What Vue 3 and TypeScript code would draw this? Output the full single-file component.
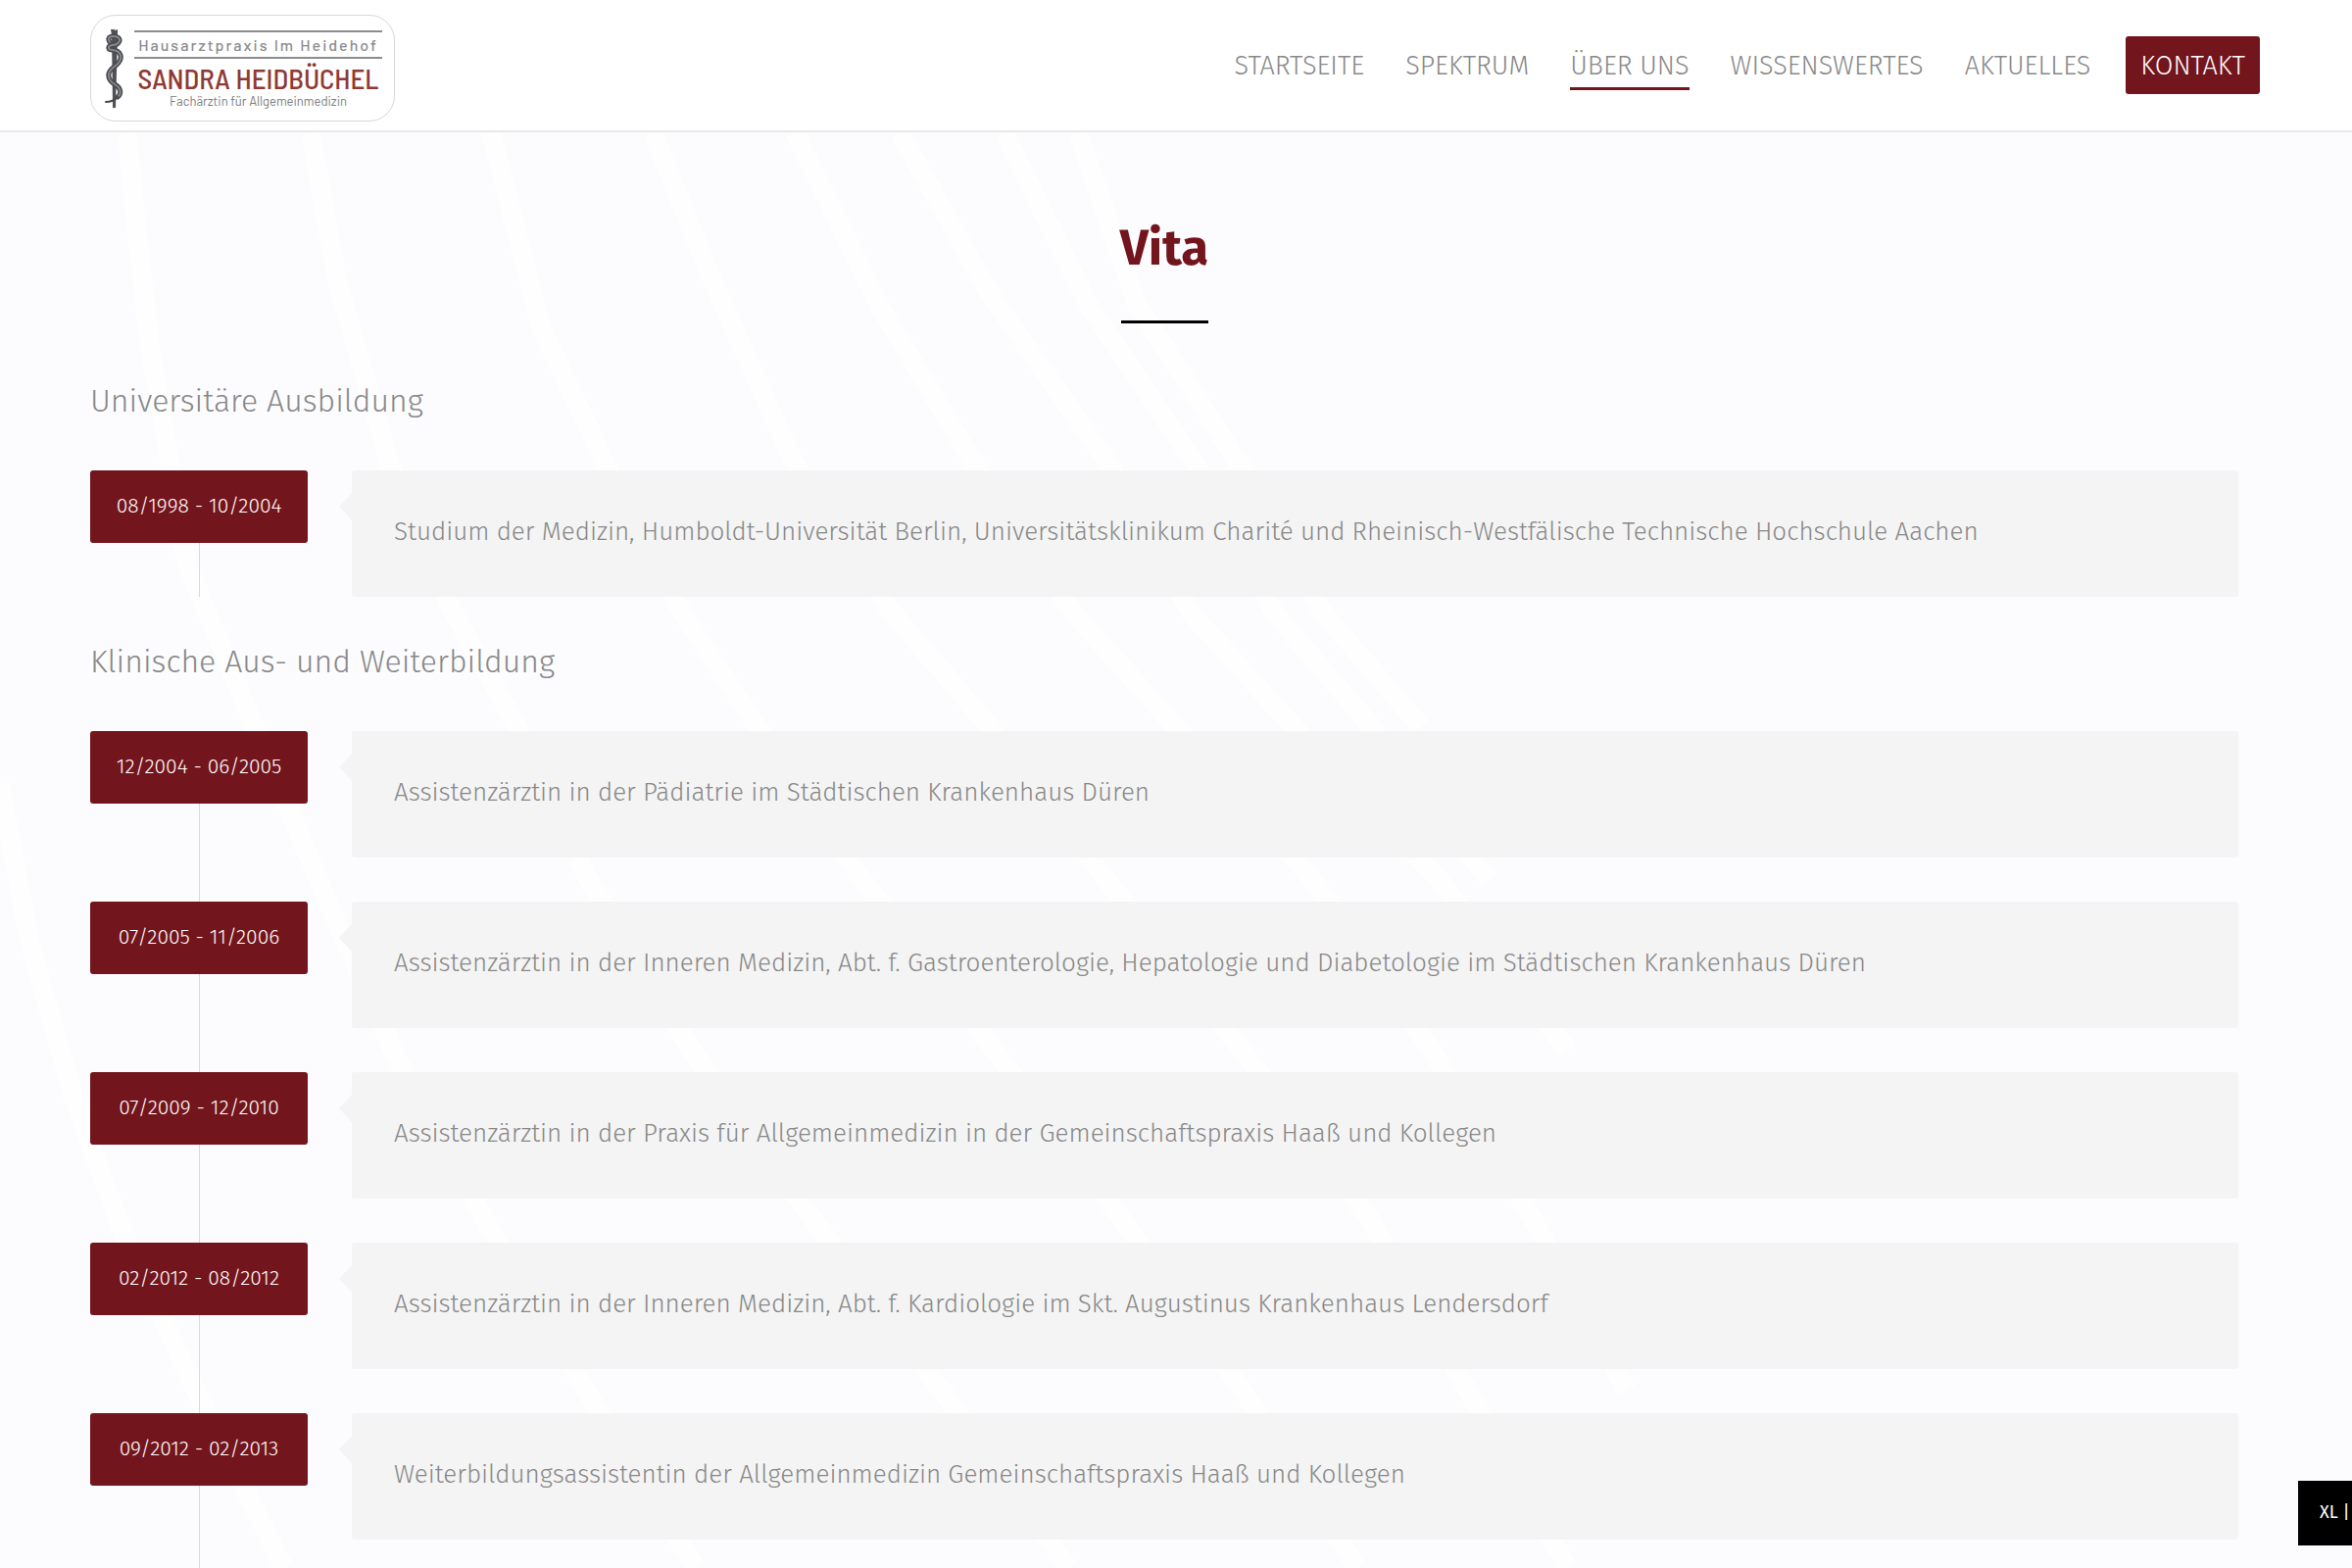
<script setup lang="ts">
interface NavItem {
  label: string
  href: string
  active?: boolean
}

interface Station {
  period: string
  text: string
}

interface Section {
  title: string
  ongoing?: boolean
  stations: Station[]
}

const nav: NavItem[] = [
  { label: 'STARTSEITE', href: '#startseite' },
  { label: 'SPEKTRUM', href: '#spektrum' },
  { label: 'ÜBER UNS', href: '#ueber-uns', active: true },
  { label: 'WISSENSWERTES', href: '#wissenswertes' },
  { label: 'AKTUELLES', href: '#aktuelles' },
]

const sections: Section[] = [
  {
    title: 'Universitäre Ausbildung',
    stations: [
      {
        period: '08/1998 - 10/2004',
        text: 'Studium der Medizin, Humboldt-Universität Berlin, Universitätsklinikum Charité und Rheinisch-Westfälische Technische Hochschule Aachen',
      },
    ],
  },
  {
    title: 'Klinische Aus- und Weiterbildung',
    ongoing: true,
    stations: [
      { period: '12/2004 - 06/2005', text: 'Assistenzärztin in der Pädiatrie im Städtischen Krankenhaus Düren' },
      { period: '07/2005 - 11/2006', text: 'Assistenzärztin in der Inneren Medizin, Abt. f. Gastroenterologie, Hepatologie und Diabetologie im Städtischen Krankenhaus Düren' },
      { period: '07/2009 - 12/2010', text: 'Assistenzärztin in der Praxis für Allgemeinmedizin in der Gemeinschaftspraxis Haaß und Kollegen' },
      { period: '02/2012 - 08/2012', text: 'Assistenzärztin in der Inneren Medizin, Abt. f. Kardiologie im Skt. Augustinus Krankenhaus Lendersdorf' },
      { period: '09/2012 - 02/2013', text: 'Weiterbildungsassistentin der Allgemeinmedizin Gemeinschaftspraxis Haaß und Kollegen' },
    ],
  },
]

// Soft light rays of the page backdrop
const rays: string[] = [
  '0,800 30,960 75,1120 130,1270 210,1440 290,1600',
  '130,135 140,240 153,353 191,576 260,742 325,898 401,1072 495,1246 598,1419 710,1600',
  '317,135 344,286 398,474 460,620 528,742 601,898 706,1072 831,1246 961,1419 1090,1600',
  '501,135 551,331 620,478 696,625 773,742 880,898 1015,1072 1146,1246 1268,1419 1385,1600',
  '666,135 727,286 811,474 910,625 1010,742 1129,898 1268,1072 1399,1246 1498,1419 1600,1600',
  '811,135 895,308 995,474 1095,625 1200,742 1340,898 1461,1072 1565,1246 1660,1419',
  '918,135 1010,300 1132,474 1215,625 1320,742 1469,898 1600,1072',
  '1025,135 1110,310 1220,474 1300,625 1400,742 1520,898',
  '1100,135 1160,310 1265,474 1350,625 1450,742',
]
</script>

<template>
  <div class="page">
    <svg class="backdrop" viewBox="0 0 2400 1600" preserveAspectRatio="none" aria-hidden="true">
      <polyline v-for="ray in rays" :key="ray" :points="ray" />
    </svg>

    <header class="header">
      <a class="logo" href="#startseite">
        <svg class="staff" viewBox="0 0 20 82" aria-hidden="true">
          <path class="rod" d="M6 1 L9 1 L9 0 L10 2 L13 1 L13 7 L11 81 L8 81 L7 7 Z" />
          <path class="snake-edge" d="M5 14 C1 8 8 7 13 9 C18 12 13 17 8 17 C2 18 3 22 8 22 C17 23 18 30 14 35 C11 39 5 41 4 46 C3 51 5 54 10 57 C17 61 17 67 13 70" />
          <path class="snake" d="M5 14 C1 8 8 7 13 9 C18 12 13 17 8 17 C2 18 3 22 8 22 C17 23 18 30 14 35 C11 39 5 41 4 46 C3 51 5 54 10 57 C17 61 17 67 13 70" />
          <path class="tail" d="M13 70 C9 74 5 75 1 75" />
        </svg>
        <span class="logo-text">
          <span class="logo-practice">Hausarztpraxis Im Heidehof</span>
          <span class="logo-name">SANDRA HEIDBÜCHEL</span>
          <span class="logo-role">Fachärztin für Allgemeinmedizin</span>
        </span>
      </a>
      <nav class="nav">
        <a v-for="item in nav" :key="item.label" :href="item.href" :class="['nav-link', { active: item.active }]">{{ item.label }}</a>
        <a class="contact" href="#kontakt">KONTAKT</a>
      </nav>
    </header>

    <main class="content">
      <h1 class="title">Vita</h1>
      <section v-for="section in sections" :key="section.title" :class="['section', { ongoing: section.ongoing }]">
        <h2 class="section-title">{{ section.title }}</h2>
        <ol class="timeline">
          <li v-for="station in section.stations" :key="station.period" class="station">
            <div class="rail">
              <div class="period">{{ station.period }}</div>
            </div>
            <p class="panel">{{ station.text }}</p>
          </li>
        </ol>
      </section>
    </main>

    <div class="breakpoint">XL |</div>
  </div>
</template>

<style>
body {
  margin: 0;
  background: #fcfcfe;
}
</style>

<style scoped>
.page {
  position: relative;
  min-height: 100vh;
  font-family: 'Fira Sans', 'Noto Sans', sans-serif;
  font-weight: 300;
  color: #888;
}

.backdrop {
  position: absolute;
  top: 0;
  left: 0;
  width: 100%;
  height: 1600px;
  fill: none;
  stroke: #fff;
  stroke-width: 20;
  stroke-linejoin: round;
  opacity: 0.7;
}

.header {
  position: relative;
  display: flex;
  justify-content: space-between;
  align-items: center;
  height: 133px;
  padding: 0 94px 0 92px;
  background: #fff;
  border-bottom: 2px solid #e8e8e8;
}

.logo {
  display: flex;
  gap: 10px;
  margin-top: 6px;
  padding: 13px 12px 12px 14px;
  border: 1px solid #d8d8d8;
  border-radius: 26px;
  text-decoration: none;
}

.staff {
  width: 20px;
  height: 82px;
}

.rod {
  fill: #505155;
}

.snake-edge,
.snake,
.tail {
  fill: none;
  stroke-linecap: round;
}

.snake-edge {
  stroke: #48494c;
  stroke-width: 5;
}

.snake {
  stroke: #85868a;
  stroke-width: 2;
}

.tail {
  stroke: #48494c;
  stroke-width: 2;
}

.logo-text {
  display: flex;
  flex-direction: column;
  width: 253px;
  padding-top: 2px;
  text-align: center;
  white-space: nowrap;
  font-family: Barlow, Roboto, sans-serif;
}

.logo-practice {
  border: solid #8b8c90;
  border-width: 2px 0;
  font-size: 16px;
  line-height: 25px;
  letter-spacing: 2px;
  font-weight: 500;
  color: #8b8c90;
}

.logo-name {
  margin-top: 4px;
  font-family: 'Barlow Semi Condensed', 'Roboto Condensed', sans-serif;
  font-size: 29px;
  line-height: 32px;
  font-weight: 500;
  color: #8f3a34;
}

.logo-role {
  font-size: 13px;
  line-height: 14px;
  font-weight: 400;
  color: #7b7c80;
}

.nav {
  display: flex;
  align-items: center;
  gap: 42px;
  font-size: 27px;
}

.nav-link {
  padding: 6px 0 4px;
  border: solid transparent;
  border-width: 3px 0;
  line-height: 35px;
  color: #888;
  text-decoration: none;
}

.nav-link.active {
  border-bottom-color: #73151d;
}

.contact {
  margin-left: -6px;
  padding: 13px 15px 11px;
  border-radius: 3px;
  background: #73151d;
  color: #fff;
  line-height: 35px;
  text-decoration: none;
}

.content {
  position: relative;
  padding: 88px 116px 0 92px;
}

.title {
  display: flex;
  flex-direction: column;
  align-items: center;
  gap: 44px;
  margin: 0 0 59px;
  font-size: 51px;
  line-height: 60px;
  font-weight: 700;
  color: #73151d;
}

.title::after {
  content: '';
  width: 89px;
  height: 3px;
  background: #000;
}

.section + .section {
  margin-top: 46px;
}

.section-title {
  margin: 0 0 51px;
  font-size: 32px;
  line-height: 40px;
  font-weight: 300;
}

.timeline {
  margin: 0;
  padding: 0;
  list-style: none;
}

.station {
  display: grid;
  grid-template-columns: 222px 1fr;
  gap: 45px;
}

.rail {
  display: flex;
  flex-direction: column;
  align-items: center;
}

.rail::after {
  content: '';
  flex: 1;
  width: 1px;
  background: #d8d8d8;
}

.period {
  align-self: stretch;
  padding-bottom: 2px;
  border-radius: 3px;
  background: #73151d;
  color: #fff;
  font-size: 21px;
  line-height: 72px;
  font-weight: 300;
  text-align: center;
}

.panel {
  position: relative;
  margin: 0 0 45px;
  padding: 41px 43px 44px;
  border-radius: 3px;
  background: #f4f4f4;
  font-size: 26px;
  line-height: 44px;
}

.panel::before {
  content: '';
  position: absolute;
  top: 23px;
  left: -13px;
  width: 13px;
  height: 28px;
  background: #f4f4f4;
  clip-path: polygon(100% 0, 100% 100%, 0 50%);
}

.section:not(.ongoing) .station:last-child .panel {
  margin-bottom: 0;
}

.breakpoint {
  position: fixed;
  right: 0;
  bottom: 23px;
  width: 33px;
  padding: 0 0 2px 22px;
  background: #000;
  color: #fff;
  font-size: 18px;
  line-height: 64px;
  font-weight: 400;
  white-space: nowrap;
}
</style>
